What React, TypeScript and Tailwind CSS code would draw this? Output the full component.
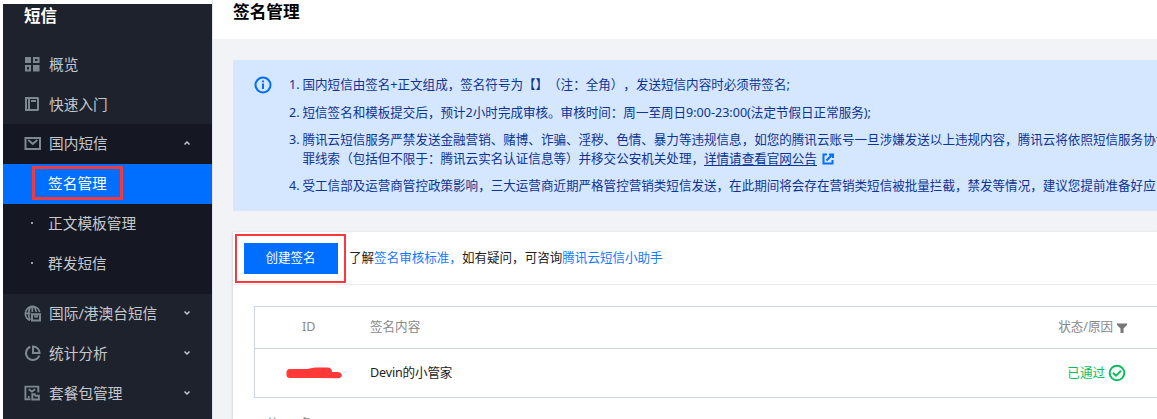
import React from "react";

const iconClass = "size-4 shrink-0 text-[#7d8790]";

function GridIcon() {
  return (
    <svg viewBox="0 0 16 16" className={iconClass} fill="none" stroke="currentColor" strokeWidth="2">
      <path d="M1 1h6v6H1zM9 9h6.5v6.500H9z" fill="currentColor" stroke="none" />
      <path d="M10 2h4.500v4H10zM2 10h4v4.500H2z" />
    </svg>
  );
}

function BookIcon() {
  return (
    <svg viewBox="0 0 16 16" className={iconClass} fill="none" stroke="currentColor" strokeWidth="2">
      <path d="M2 2h11.500l.5.500v11l-.5.500H2zM5 2v12M7 5h5" />
    </svg>
  );
}

function MailIcon() {
  return (
    <svg viewBox="0 0 18 16" className="-mr-0.5 h-4 w-[18px] shrink-0 text-[#7d8790]" fill="none" stroke="currentColor" strokeWidth="2">
      <path d="M1.500 3h14.500v11H1.500zM4.300 5l4.500 4 4.500-4" />
    </svg>
  );
}

function GlobeIcon() {
  return (
    <svg viewBox="0 0 17 17" className="-mr-px size-[17px] shrink-0 text-[#7d8790]" fill="none" stroke="currentColor" strokeWidth="1.700">
      <path d="M6 15.300A7.200 7.200 0 1 1 15.600 7M1 8.300h5.500M8.300 1v6M6.200 15C3.800 11 4 4.500 7.400 1.200M9.300 1.200C11.200 2.800 12 4.800 12.300 7" />
      <path d="M8 9.200h8v6.300H8zM10.200 11.500h3.800" strokeWidth="2" />
    </svg>
  );
}

function PieIcon() {
  return (
    <svg viewBox="0 0 17 17" className="-mr-px size-[17px] shrink-0 text-[#7d8790]" fill="none" stroke="currentColor" strokeWidth="2">
      <path d="M6.300 1.700a6.900 6.900 0 1 0 9 9M9 1.500v6.500h6.600A6.600 6.600 0 0 0 9 1.500z" />
    </svg>
  );
}

function PackageIcon() {
  return (
    <svg viewBox="0 0 16 16" className={iconClass} fill="none" stroke="currentColor" strokeWidth="1.900">
      <path d="M6.500 14.200H1.400V1.600h12.900v6M4.700 4.200l3.200 2.300 3.200-2.300M4 12h1.500" />
      <path d="M8.300 14.500V9.300h2.400l.8 1.400h3.400v3.800z" />
    </svg>
  );
}

function Chevron({ up = false }: { up?: boolean }) {
  return (
    <svg viewBox="0 0 8 6" className="mr-[21px] ml-auto h-1.5 w-2 text-[#c3c7cc]" fill="none" stroke="currentColor" strokeWidth="1.500">
      <path d={up ? "M1.500 4.500L4 2l2.500 2.500" : "M1.500 1.500L4 4l2.500-2.500"} />
    </svg>
  );
}

function NavRow({ icon, label, arrow }: { icon: React.ReactNode; label: string; arrow?: "up" | "down" }) {
  return (
    <div className="flex h-[39.6px] items-center pb-px pl-[21px]">
      {icon}
      <span className="ml-[9px]">{label}</span>
      {arrow && <Chevron up={arrow === "up"} />}
    </div>
  );
}

function SubRow({ label }: { label: string }) {
  return (
    <div className="flex h-[39.6px] items-center pb-px pl-7">
      <span className="size-[2px] bg-[#9aa0a8]" />
      <span className="ml-[15px]">{label}</span>
    </div>
  );
}

function Sidebar() {
  return (
    <aside className="mt-1 ml-[3px] h-[415px] w-[209px] shrink-0 overflow-hidden bg-[#1e222d] text-[14.7px] text-[#c5c8cd]">
      <div className="flex h-[41px] items-start pl-[21px] text-[16.5px] leading-6 font-bold text-white">短信</div>
      <NavRow icon={<GridIcon />} label="概览" />
      <NavRow icon={<BookIcon />} label="快速入门" />
      <div className="h-[170px] bg-[#151823]">
        <NavRow icon={<MailIcon />} label="国内短信" arrow="up" />
        <div className="flex h-10 items-center bg-[#006eff] pl-[29px] text-white">
          <div className="-mt-0.5 flex h-[34px] w-[91px] items-center border-3 border-[#ee3a43] pl-[13px]">签名管理</div>
        </div>
        <SubRow label="正文模板管理" />
        <SubRow label="群发短信" />
      </div>
      <NavRow icon={<GlobeIcon />} label="国际/港澳台短信" arrow="down" />
      <NavRow icon={<PieIcon />} label="统计分析" arrow="down" />
      <NavRow icon={<PackageIcon />} label="套餐包管理" arrow="down" />
    </aside>
  );
}

function Item({ n, className, children }: { n: number; className: string; children: React.ReactNode }) {
  return (
    <li className={`flex ${className}`}>
      <span className="w-[13.500px] shrink-0">{n}.</span>
      <div>{children}</div>
    </li>
  );
}

function Notice() {
  return (
    <section className="mt-[21px] ml-[21px] flex h-[151px] bg-[#d5e7ff] pl-[21px] text-[12.550px] leading-[19px] text-[#0d3394]">
      <svg viewBox="0 0 18 18" className="mt-4 size-[18px] shrink-0" fill="none" stroke="#006eff" strokeWidth="2">
        <circle cx="9" cy="9" r="7.500" />
        <path d="M9 4.500v1.700M9 7.500v5.500" />
      </svg>
      <ol className="mt-[15px] ml-[17px] whitespace-nowrap">
        <Item n={1} className="mb-[9px]">国内短信由签名+正文组成，签名符号为【】（注：全角），发送短信内容时必须带签名;</Item>
        <Item n={2} className="mb-2">短信签名和模板提交后，预计2小时完成审核。审核时间：周一至周日9:00-23:00(法定节假日正常服务);</Item>
        <Item n={3} className="mb-2">
          腾讯云短信服务严禁发送金融营销、赌博、诈骗、淫秽、色情、暴力等违规信息，如您的腾讯云账号一旦涉嫌发送以上违规内容，腾讯云将依照短信服务协议
          <div className="flex items-center">
            罪线索（包括但不限于：腾讯云实名认证信息等）并移交公安机关处理，
            <a className="underline underline-offset-2">详情请查看官网公告</a>
            <svg viewBox="0 0 12 12" className="ml-[5px] size-3" fill="none" stroke="#006eff" strokeWidth="2">
              <path d="M5 1.500H1.500v9h9V7M4.500 7.500l5-5M7 1.500h4V5" />
            </svg>
          </div>
        </Item>
        <Item n={4} className="">受工信部及运营商管控政策影响，三大运营商近期严格管控营销类短信发送，在此期间将会存在营销类短信被批量拦截，禁发等情况，建议您提前准备好应</Item>
      </ol>
    </section>
  );
}

function SignaturePanel() {
  return (
    <section className="mt-[21px] ml-[21px] h-[187px] overflow-hidden bg-white text-[12.550px] text-[#222] shadow-[0_1px_3px_rgba(0,0,0,0.200)]">
      <div className="flex h-[53px] items-center border-b border-[#e9ebef] pl-0.5">
        <div className="flex h-[49px] w-[111px] items-center justify-center border-2 border-[#f9393c]">
          <button className="h-[31px] w-[94px] bg-[#006eff] text-white">创建签名</button>
        </div>
        <p className="ml-[3px] whitespace-nowrap">
          了解<a className="text-[#1677ff]">签名审核标准，</a>如有疑问，可咨询<a className="text-[#1677ff]">腾讯云短信小助手</a>
        </p>
      </div>
      <div className="mt-[21px] ml-[21px] h-[92px] border-y border-l border-[#cfd5de]">
        <div className="flex h-[42px] items-center border-b border-[#cfd5de] pl-[47px] text-[#888]">
          <span className="w-[68px]">ID</span>
          <span>签名内容</span>
          <span className="mr-[4px] ml-auto">状态/原因</span>
          <svg viewBox="0 0 10 10" className="mr-[30px] size-2.5" fill="#777">
            <path d="M0 .5h10v1.500L6.500 5.500V10h-3V5.500L0 2z" />
          </svg>
        </div>
        <div className="flex h-12 items-center pl-[31px]">
          <svg viewBox="0 0 56 12" className="h-3 w-14" fill="#ff3838">
            <path d="M3 2h18l8-1.500h13q4 .5 4 4.500h6q4 .5 3.800 3.500-.4 3-4.800 2.700L35 11H4Q0 11 .5 7 0 3 3 2z" />
          </svg>
          <span className="ml-7 tracking-[-0.15px]">Devin的小管家</span>
          <span className="mr-[3px] ml-auto text-[#0abf5b]">已通过</span>
          <svg viewBox="0 0 18 18" className="mr-[31px] size-[18px]" fill="none" stroke="#0abf5b" strokeWidth="2">
            <circle cx="9" cy="9" r="7.300" />
            <path d="M5 8.700l3 3 5-5" />
          </svg>
        </div>
      </div>
      <div className="mt-4 ml-[33px] flex gap-[7px] leading-[19px] text-[#888]">
        <span>共</span>
        <span>1</span>
        <span>条</span>
      </div>
    </section>
  );
}

export default function App() {
  return (
    <div className="flex h-[419px] w-[1157px] overflow-hidden bg-white font-['Noto_Sans','Noto_Sans_CJK_SC',sans-serif] [text-spacing-trim:space-all]">
      <Sidebar />
      <main className="min-w-0 flex-1 overflow-hidden border-l border-[#e2e4e9] bg-[#f2f3f7]">
        <header className="-ml-px flex h-[39px] items-start bg-white pl-[21px] text-[16.700px] leading-6 font-bold text-black">签名管理</header>
        <div className="-ml-px">
          <Notice />
          <SignaturePanel />
        </div>
      </main>
    </div>
  );
}
